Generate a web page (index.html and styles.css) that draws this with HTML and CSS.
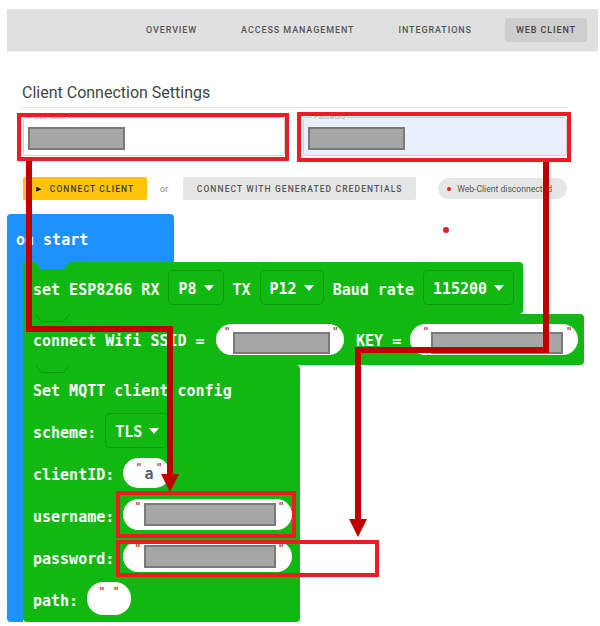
FILE: index.html
```html
<!DOCTYPE html>
<html lang="en">
<head>
<meta charset="utf-8">
<title>Web Client</title>
<link rel="stylesheet" href="styles.css">
</head>
<body>
<div class="page">
  <nav class="tabs">
    <span class="tab">Overview</span>
    <span class="tab">Access Management</span>
    <span class="tab">Integrations</span>
    <span class="tab active">Web Client</span>
  </nav>

  <section class="settings">
    <h2 class="title">Client Connection Settings</h2>
    <div class="fields">
      <fieldset class="field">
        <legend>Username</legend>
        <span class="redact field-redact"></span>
      </fieldset>
      <fieldset class="field autofill">
        <legend>Password</legend>
        <span class="redact field-redact"></span>
      </fieldset>
    </div>
    <div class="actions">
      <button class="btn primary"><span class="play">&#9654;</span>Connect Client</button>
      <span class="or">or</span>
      <button class="btn secondary">Connect with generated credentials</button>
      <span class="chip"><i class="dot"></i>Web-Client disconnected</span>
    </div>
  </section>

  <div class="workspace">
    <div class="hat">on start</div>
    <div class="hat-body">
      <div class="stem"></div>
      <div class="stack">
        <div class="block b1">
          <svg class="notch" width="36" height="8" viewBox="0 0 36 8"><path d="M0 0 L6 7 L29 7 L35 0 Z" fill="#1e90ff"/></svg>
          <div class="row">
            <span class="lbl">set ESP8266 RX</span>
            <span class="dd">P8<i class="tri"></i></span>
            <span class="lbl">TX</span>
            <span class="dd">P12<i class="tri"></i></span>
            <span class="lbl">Baud rate</span>
            <span class="dd">115200<i class="tri"></i></span>
          </div>
        </div>
        <div class="block b2">
          <svg class="notch" width="36" height="9" viewBox="0 0 36 9"><path d="M0.5 0 L6.5 7.5 L28.5 7.5 L34.5 0" fill="#11b811" stroke="#0c960c" stroke-width="1"/></svg>
          <div class="row">
            <span class="lbl">connect Wifi SSID =</span>
            <span class="pill low ssid"><i class="q">"</i><span class="redact r97"></span><i class="q">"</i></span>
            <span class="lbl key">KEY =</span>
            <span class="pill low keyp"><i class="q">"</i><span class="redact r132"></span><i class="q">"</i></span>
          </div>
        </div>
        <div class="block b3">
          <svg class="notch" width="36" height="9" viewBox="0 0 36 9"><path d="M0.5 0 L6.5 7.5 L28.5 7.5 L34.5 0" fill="#11b811" stroke="#0c960c" stroke-width="1"/></svg>
          <div class="rows">
            <div class="row r"><span class="lbl">Set MQTT client config</span></div>
            <div class="row r"><span class="lbl">scheme:</span><span class="dd">TLS<i class="tri"></i></span></div>
            <div class="row r"><span class="lbl">clientID:</span><span class="pill cid"><i class="q">"</i><b class="str">a</b><i class="q">"</i></span></div>
            <div class="row r"><span class="lbl">username:</span><span class="pill cred"><i class="q">"</i><span class="redact r132"></span><i class="q">"</i></span></div>
            <div class="row r"><span class="lbl">password:</span><span class="pill cred"><i class="q">"</i><span class="redact r132"></span><i class="q">"</i></span></div>
            <div class="row r"><span class="lbl">path:</span><span class="pill path"><i class="q">"</i><i class="q">"</i></span></div>
          </div>
        </div>
      </div>
    </div>
  </div>

  <svg class="overlay" width="600" height="626" viewBox="0 0 600 626" aria-hidden="true">
    <g fill="none" stroke="#ec1c24" stroke-width="4">
      <rect x="19" y="115" width="268" height="44"/>
      <rect x="299" y="114" width="270" height="46"/>
      <rect x="118" y="493" width="176" height="43"/>
      <rect x="118" y="542" width="259" height="33"/>
    </g>
    <g fill="none" stroke="#c00000" stroke-width="6" stroke-linejoin="miter">
      <polyline points="29,161 29,329 170,329 170,476"/>
      <polyline points="546,162 546,350 358,350 358,522"/>
    </g>
    <g fill="#c00000">
      <polygon points="161,474 179,474 170,492"/>
      <polygon points="349,519 367,519 358,537"/>
    </g>
    <circle cx="446" cy="230" r="3" fill="#e81c24"/>
  </svg>
</div>
</body>
</html>
```

FILE: styles.css
```css
* { box-sizing: border-box; }
html, body { margin: 0; padding: 0; background: #fff; }
body {
  width: 600px;
  height: 626px;
  overflow: hidden;
  font-family: Roboto, "Liberation Sans", Arial, sans-serif;
}
.page {
  position: relative;
  width: 600px;
  height: 626px;
  padding-top: 9px;
}

/* top navigation */
.tabs {
  margin: 0 2px 0 7px;
  height: 42px;
  background: #e0e0e0;
  display: flex;
  justify-content: flex-end;
  align-items: center;
  gap: 22px;
  padding-right: 11px;
  box-shadow: 0 1px 1px rgba(0, 0, 0, 0.06);
}
.tab {
  font-size: 9px;
  font-weight: 500;
  letter-spacing: 0.9px;
  text-transform: uppercase;
  color: #555;
  padding: 0 11px;
  height: 24px;
  line-height: 24px;
  border-radius: 2px;
}
.tab.active { background: #cecece; color: #444; }

/* settings */
.settings {
  margin: 0 32px 0 20px;
}
.title {
  margin: 0;
  padding: 32px 0 4px 2px;
  font-size: 16px;
  font-weight: 400;
  line-height: 20px;
  color: #444;
  border-bottom: 1px solid #e8e8e8;
}
.fields {
  margin-top: 5px;
  display: flex;
  gap: 18px;
  padding-left: 3px;
}
.field {
  margin: 0;
  width: 262px;
  min-width: 0;
  padding: 0 4px 5px;
  border: 1px solid #cfcfcf;
  border-radius: 3px;
}
.field.autofill { width: 264px; background: #e8f0fe; }
.field legend {
  font-size: 7px;
  line-height: 8px;
  padding: 0 2px;
  margin-left: 4px;
  color: #aaa;
}
.redact {
  display: block;
  background: #a6a6a6;
  border: 2px solid #7a7a7a;
  height: 22px;
}
.field-redact { width: 97px; height: 23px; margin-top: 6px; }

.actions {
  margin-top: 21px;
  display: flex;
  align-items: center;
  padding-left: 3px;
  height: 23px;
}
.btn {
  font-family: Roboto, "Liberation Sans", Arial, sans-serif;
  font-size: 8.5px;
  font-weight: 500;
  letter-spacing: 1.1px;
  text-transform: uppercase;
  height: 23px;
  border: none;
  border-radius: 2px;
  color: #444;
  display: flex;
  align-items: center;
  justify-content: center;
  padding: 0;
}
.btn.primary { width: 124px; background: #ffc20d; color: #3a3a3a; }
.play { font-size: 7px; margin-right: 8px; color: #222; }
.or { margin: 0 15px 0 13px; color: #8a8a8a; font-size: 9px; }
.btn.secondary { width: 233px; background: #e6e6e6; color: #555; }
.chip {
  margin-left: 22px;
  height: 21px;
  width: 129px;
  padding-left: 9px;
  border-radius: 11px;
  background: #e6e6e6;
  font-size: 8.6px;
  color: #555;
  display: flex;
  align-items: center;
  white-space: nowrap;
}
.dot {
  width: 4px;
  height: 4px;
  border-radius: 50%;
  background: #e8202a;
  margin-right: 6px;
  flex: none;
}

/* blocks workspace */
.workspace {
  margin-top: 14px;
  font-family: "DejaVu Sans Mono", "Liberation Mono", monospace;
  font-weight: bold;
  font-size: 15px;
  color: #fff;
}
.hat {
  margin-left: 7px;
  width: 167px;
  height: 48px;
  line-height: 52px;
  padding-left: 9px;
  background: #1e90ff;
  border-radius: 4px 4px 0 0;
}
.hat-body {
  display: flex;
  margin-left: 7px;
  height: 360px;
}
.stem {
  width: 16px;
  background: #1e90ff;
  border-radius: 0 0 0 4px;
}
.stack {
  display: flex;
  flex-direction: column;
  align-items: flex-start;
}
.block {
  position: relative;
  background: #11b811;
  border-radius: 0 4px 4px 0;
}
.notch { position: absolute; left: 12px; top: 0; }
.b1 { width: 500px; height: 52px; }
.b2 { width: 561px; height: 51px; }
.b3 { width: 277px; height: 258px; border-radius: 0 4px 4px 4px; }

.row {
  display: flex;
  align-items: center;
  height: 100%;
  padding-left: 10px;
  gap: 9px;
  white-space: pre;
}
.lbl { padding-top: 4px; }
.b2 .row { gap: 11px; }
.b2 .key { margin-left: 1px; }
.rows {
  display: grid;
  grid-template-rows: repeat(6, 42px);
  padding-top: 3px;
}
.rows .row { height: 42px; }

.dd {
  display: flex;
  align-items: center;
  gap: 7px;
  height: 35px;
  padding: 2px 9px 0;
  border: 1px solid #0d9a0d;
  border-radius: 5px;
}
.tri {
  width: 0;
  height: 0;
  border-left: 5px solid transparent;
  border-right: 5px solid transparent;
  border-top: 6px solid #fff;
  margin-top: -2px;
}

.pill {
  display: flex;
  align-items: center;
  gap: 3px;
  background: #fff;
  height: 31px;
  border-radius: 16px;
}
.q {
  font-style: normal;
  font-family: "DejaVu Sans", sans-serif;
  font-size: 10px;
  line-height: 10px;
  color: #b3353a;
  align-self: flex-start;
  margin-top: 3px;
}
.pill.low { align-items: flex-end; padding-bottom: 1px; }
.pill.low .redact { height: 22px; }
.ssid { padding: 0 6px 0 9px; }
.keyp { padding: 0 6px 0 13px; margin-left: -2px; }
.r97 { width: 97px; }
.r132 { width: 132px; }
.cred { padding: 0 8px 0 12px; }
.cred .redact { height: 23px; }
.cid { height: 30px; padding: 2px 8px 0 13px; }
.str { color: #575e75; font-weight: bold; }
.path { height: 33px; padding: 0 12px; gap: 9px; }
.path .q { margin-top: 5px; }

/* annotation overlay */
.overlay {
  position: absolute;
  left: 0;
  top: 0;
  pointer-events: none;
}
```
